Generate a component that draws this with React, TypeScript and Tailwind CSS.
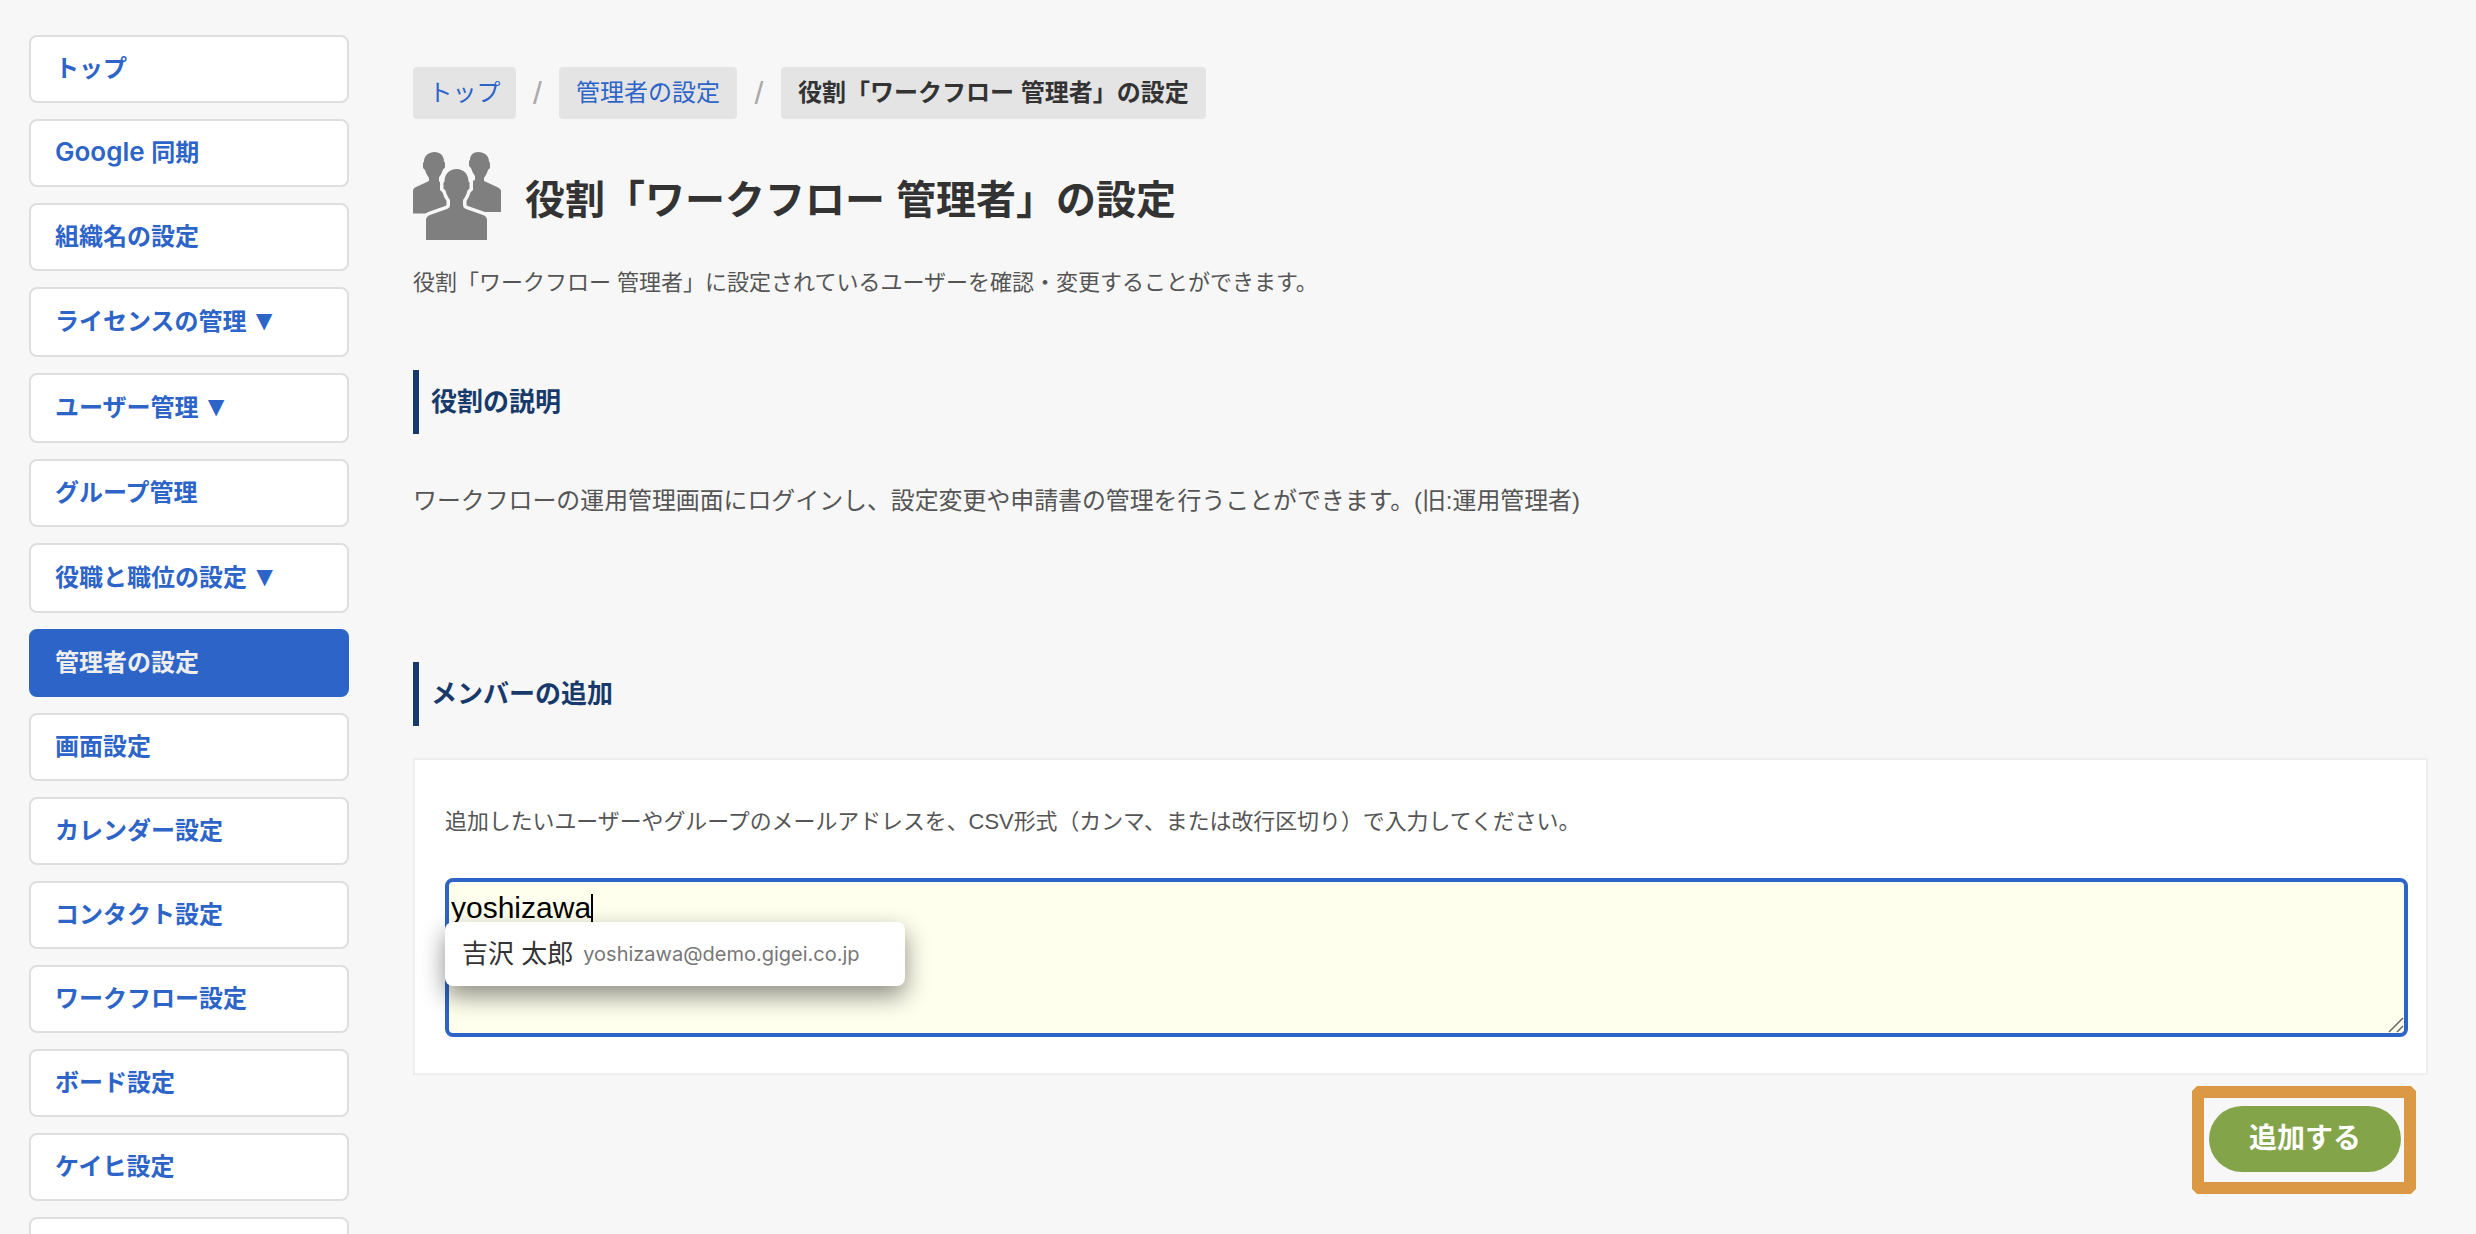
import type { ReactNode } from "react";

const arrow = <span className="-ml-[3px] text-[28px] leading-none">▼</span>;

const nav: { label: ReactNode; h: string; active?: boolean }[] = [
  { label: "トップ", h: "h-[68px]" },
  {
    label: (
      <>
        <span className="text-[26px] leading-none font-semibold" style={{ fontFamily: "Inter, sans-serif" }}>Google</span> 同期
      </>
    ),
    h: "h-[68px]",
  },
  { label: "組織名の設定", h: "h-[68px]" },
  { label: <>ライセンスの管理 {arrow}</>, h: "h-[70px]" },
  { label: <>ユーザー管理 {arrow}</>, h: "h-[70px]" },
  { label: "グループ管理", h: "h-[68px]" },
  { label: <>役職と職位の設定 {arrow}</>, h: "h-[70px]" },
  { label: "管理者の設定", h: "h-[68px]", active: true },
  { label: "画面設定", h: "h-[68px]" },
  { label: "カレンダー設定", h: "h-[68px]" },
  { label: "コンタクト設定", h: "h-[68px]" },
  { label: "ワークフロー設定", h: "h-[68px]" },
  { label: "ボード設定", h: "h-[68px]" },
  { label: "ケイヒ設定", h: "h-[68px]" },
  { label: "", h: "h-[68px]" },
];

function PeopleIcon() {
  return (
    <svg width="88" height="89" viewBox="0 0 88 89" className="shrink-0">
      <path fill="#7f7f7f" d="M21.500 0c5.500 0 9.500 3.500 9.500 9.500l1 1v5l-2 2c-1 3-2.500 6-4 8v4l14 6-2 26H0V39c0-2 1-3 3-4l13-6v-3c-1.500-2-3-5-4-8l-2-2v-5l1-1.500C11 3.500 16 0 21.500 0z" />
      <path fill="#7f7f7f" d="M65.500 0c5.500 0 10.500 3.500 10.500 9.500l1 1.500v5l-2 2c-1 3-2.500 6-4 8v3l13 6c2 1 4 2 4 4v21H50l-2-26 14-6v-4c-1.500-2-3-5-4-8l-2-2v-5l1-1C57 3.500 60 0 65.500 0z" />
      <path fill="#7f7f7f" stroke="#f7f7f7" strokeWidth="7" paintOrder="stroke" d="M43.500 17c7 0 12 5 12 12.500l1 1v6l-2 2c-1 4-2.500 7-4.500 9.500v5c0 2 1 3 3 4l17 6c2.500 1 4 2.500 4 5V88H13V68c0-2.500 1.500-4 4-5l17-6c2-1 3-2 3-4v-5c-2-2.500-3.500-5.500-4.500-9.500l-2-2v-6l1-1C31.500 22 36.500 17 43.500 17z" />
    </svg>
  );
}

function Section({ children }: { children: ReactNode }) {
  return (
    <h2 className="h-[64px] border-l-[6px] border-[#173a6b] pl-3 flex items-center text-[26px] font-bold text-[#173a6b]">
      {children}
    </h2>
  );
}

export default function App() {
  return (
    <div
      className="h-[1234px] overflow-hidden bg-[#f7f7f7] flex text-[#555]"
      style={{ fontFamily: '"Liberation Sans", "Noto Sans CJK JP", sans-serif' }}
    >
      <nav className="w-[413px] shrink-0 pl-[29px] pt-[35px] flex flex-col gap-4">
        {nav.map((n, i) => (
          <div
            key={i}
            className={`w-[320px] shrink-0 ${n.h} rounded-lg border-2 flex items-center pl-[24px] text-[24px] font-bold whitespace-pre-wrap ${
              n.active
                ? "bg-[#2d64c8] border-[#2d64c8] text-[#eeeeee]"
                : "bg-white border-[#dedede] text-[#2d64c8]"
            }`}
          >
            <span>{n.label}</span>
          </div>
        ))}
      </nav>

      <main className="w-[2015px] shrink-0 pt-[67px]">
        <div className="flex items-center text-[24px]">
          <span className="h-[52px] px-[15.5px] flex items-center rounded bg-[#e4e4e4] text-[#2d64c8]">トップ</span>
          <span className="w-[43px] text-center text-[#aaa] text-[32px]">/</span>
          <span className="h-[52px] px-[17px] flex items-center rounded bg-[#e4e4e4] text-[#2d64c8]">管理者の設定</span>
          <span className="w-[44px] text-center text-[#aaa] text-[32px]">/</span>
          <span className="h-[52px] px-[17px] flex items-center rounded bg-[#e4e4e4] text-[#333] font-bold">役割「ワークフロー 管理者」の設定</span>
        </div>

        <div className="mt-[33px] flex items-center gap-6">
          <PeopleIcon />
          <h1 className="pt-[6px] text-[40px] font-bold text-[#333]">役割「ワークフロー 管理者」の設定</h1>
        </div>

        <p className="mt-[26px] text-[22px] leading-8">
          役割「ワークフロー 管理者」に設定されているユーザーを確認・変更することができます。
        </p>

        <div className="mt-[71px]">
          <Section>役割の説明</Section>
        </div>
        <p className="mt-[51px] text-[23.9px] leading-8">
          ワークフローの運用管理画面にログインし、設定変更や申請書の管理を行うことができます。(旧:運用管理者)
        </p>

        <div className="mt-[145px]">
          <Section>メンバーの追加</Section>
        </div>

        <section className="mt-[32px] h-[317px] bg-white border-2 border-[#eeeeee] pl-[30px] pr-[18px] pt-[46px]">
          <p className="text-[21.9px] leading-8">
            追加したいユーザーやグループのメールアドレスを、CSV形式（カンマ、または改行区切り）で入力してください。
          </p>
          <div className="relative mt-[40px] h-[159px] rounded-lg border-4 border-[#2d64c8] bg-[#ffffee] pl-[2px] pt-[6px] text-[30px] leading-[40px] text-black">
            <span>yoshizawa</span>
            <span className="inline-block w-[2px] h-[30px] bg-black align-[-6px]" />
            <div className="absolute left-[-4px] top-[40px] w-[460px] h-[64px] rounded-lg bg-white shadow-[0_10px_24px_rgba(0,0,0,0.45)] flex items-center pl-[17px]">
              <span className="text-[26px] text-[#333]">吉沢 太郎</span>
              <span className="ml-[10px] text-[20px] text-[#777]" style={{ fontFamily: "Inter, sans-serif" }}>yoshizawa@demo.gigei.co.jp</span>
            </div>
            <svg className="absolute right-0 bottom-0" width="16" height="16" viewBox="0 0 16 16">
              <path d="M1 15 15 1M9 15 15 9" stroke="#666" strokeWidth="1.500" fill="none" />
            </svg>
          </div>
        </section>

        <div className="mt-[11px] flex justify-end pr-[12px]">
          <div className="w-[224px] h-[108px] border-[12px] border-[#dc9945] flex items-center justify-center [clip-path:polygon(5px_0,calc(100%-5px)_0,100%_5px,100%_calc(100%-5px),calc(100%-5px)_100%,5px_100%,0_calc(100%-5px),0_5px)]">
            <button className="w-[192px] h-[66px] -mt-[2px] ml-[2px] rounded-full bg-[#84a44a] text-white text-[28px] font-bold">追加する</button>
          </div>
        </div>
      </main>
    </div>
  );
}
